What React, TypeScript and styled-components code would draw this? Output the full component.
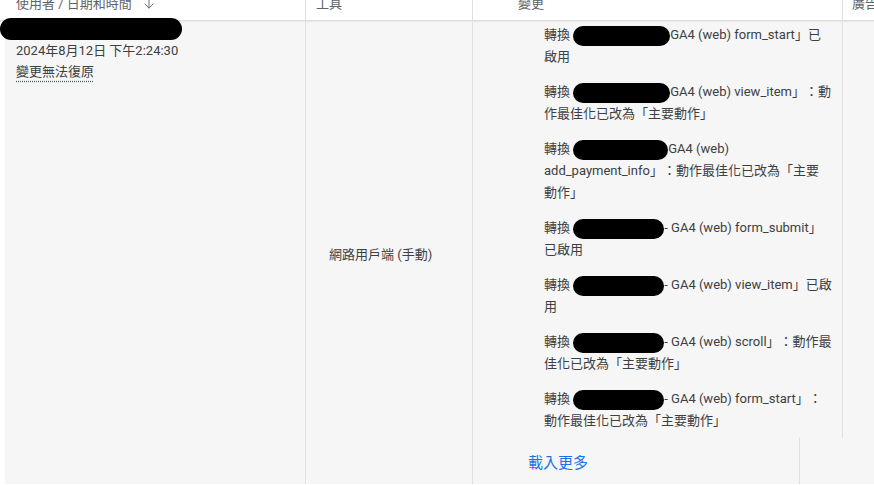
import React from 'react';
import styled, { createGlobalStyle } from 'styled-components';
import { ArrowDown } from 'lucide-react';

const GlobalStyle = createGlobalStyle`
  html, body {
    margin: 0;
    padding: 0;
    background: #ffffff;
  }
  body {
    font-family: Roboto, "Noto Sans CJK TC", "Noto Sans", sans-serif;
    font-size: 13px;
    color: #3c4043;
    text-spacing-trim: space-all;
  }
`;

const Page = styled.div`
  width: 874px;
  height: 485px;
  overflow: hidden;
  background: #ffffff;
`;

const HeaderRow = styled.div`
  position: relative;
  display: grid;
  grid-template-columns: 306px 167px 370px 1fr;
  height: 20px;
  background: #ffffff;
  border-bottom: 1px solid #dcdcdc;
  box-shadow: 0 1px 1px rgba(0, 0, 0, 0.08);
  z-index: 1;
`;

const HeadCell = styled.div<{ $pad: number; $last?: boolean }>`
  display: flex;
  align-items: flex-start;
  padding-left: ${p => p.$pad}px;
  white-space: nowrap;
  border-right: ${p => (p.$last ? 'none' : '1px solid #e0e0e0')};
`;

const HeadLabel = styled.span`
  display: flex;
  align-items: center;
  gap: 10px;
  margin-top: -4px;
  line-height: 16px;
  color: #5f6368;
`;

const BodyRow = styled.div`
  display: grid;
  grid-template-columns: 301px 167px 370px 1fr;
  margin: 1px 0 0 5px;
  height: 462px;
  background: #f6f6f6;
`;

const UserCell = styled.div`
  padding: 0 11px;
  border-right: 1px solid #e0e0e0;
  line-height: 21px;
`;

const Redacted = styled.span<{ $w: number }>`
  display: inline-block;
  width: ${p => p.$w}px;
  height: 20px;
  border-radius: 11px;
  background: #000000;
  vertical-align: middle;
`;

const UserBlob = styled(Redacted)`
  display: block;
  position: relative;
  z-index: 2;
  height: 22px;
  margin: -4px 0 0 -16px;
`;

const DateText = styled.div`
  color: #3c4043;
`;

const Irreversible = styled.span`
  text-decoration: underline dotted #5f6368;
  text-underline-offset: 5px;
`;

const ToolCell = styled.div`
  display: flex;
  align-items: center;
  padding-left: 23px;
  border-right: 1px solid #e0e0e0;
`;

const ChangeCell = styled.div`
  display: flex;
  flex-direction: column;
`;

const ChangeList = styled.ul`
  list-style: none;
  margin: 0;
  padding: 2px 10px 6px 71px;
  border-right: 1px solid #e0e0e0;
`;

const ChangeItem = styled.li`
  line-height: 22px;
  margin-bottom: 13px;
  &:last-child {
    margin-bottom: 0;
  }
`;

const KeepTogether = styled.span`
  white-space: nowrap;
`;

const LoadMoreRow = styled.div`
  width: 327px;
  flex: 1;
  display: flex;
  align-items: center;
  padding-left: 55px;
  box-sizing: border-box;
  border-right: 1px solid #e0e0e0;
`;

const LoadMore = styled.span`
  color: #1a73e8;
  font-size: 15px;
  cursor: pointer;
`;

const EmptyCell = styled.div``;

type Change = { w: number; text: string; tail?: string };

const changes: Change[] = [
  { w: 97, text: 'GA4 (web) form_start」已啟用' },
  { w: 97, text: 'GA4 (web) view_item」：動作最佳化已改為「主要動作」' },
  { w: 95, text: 'GA4 (web) add_payment_info」：動作最佳化已改為「主要', tail: '動作」' },
  { w: 91, text: '- GA4 (web) form_submit」已啟用' },
  { w: 91, text: '- GA4 (web) view_item」已啟用' },
  { w: 91, text: '- GA4 (web) scroll」：動作最佳化已改為「主要動作」' },
  { w: 91, text: '- GA4 (web) form_start」：動作最佳化已改為「主要動作」' },
];

export default function App() {
  return (
    <Page>
      <GlobalStyle />
      <HeaderRow>
        <HeadCell $pad={16}>
          <HeadLabel>
            使用者 / 日期和時間 <ArrowDown size={14} strokeWidth={1.6} />
          </HeadLabel>
        </HeadCell>
        <HeadCell $pad={10}>
          <HeadLabel>工具</HeadLabel>
        </HeadCell>
        <HeadCell $pad={45}>
          <HeadLabel>變更</HeadLabel>
        </HeadCell>
        <HeadCell $pad={9} $last>
          <HeadLabel>廣告</HeadLabel>
        </HeadCell>
      </HeaderRow>
      <BodyRow>
        <UserCell>
          <UserBlob $w={182} />
          <DateText>2024年8月12日 下午2:24:30</DateText>
          <div>
            <Irreversible>變更無法復原</Irreversible>
          </div>
        </UserCell>
        <ToolCell>網路用戶端 (手動)</ToolCell>
        <ChangeCell>
          <ChangeList>
            {changes.map((c, i) => (
              <ChangeItem key={i}>
                轉換 <Redacted $w={c.w} />{c.text}
                {c.tail && <KeepTogether>{c.tail}</KeepTogether>}
              </ChangeItem>
            ))}
          </ChangeList>
          <LoadMoreRow>
            <LoadMore>載入更多</LoadMore>
          </LoadMoreRow>
        </ChangeCell>
        <EmptyCell />
      </BodyRow>
    </Page>
  );
}
